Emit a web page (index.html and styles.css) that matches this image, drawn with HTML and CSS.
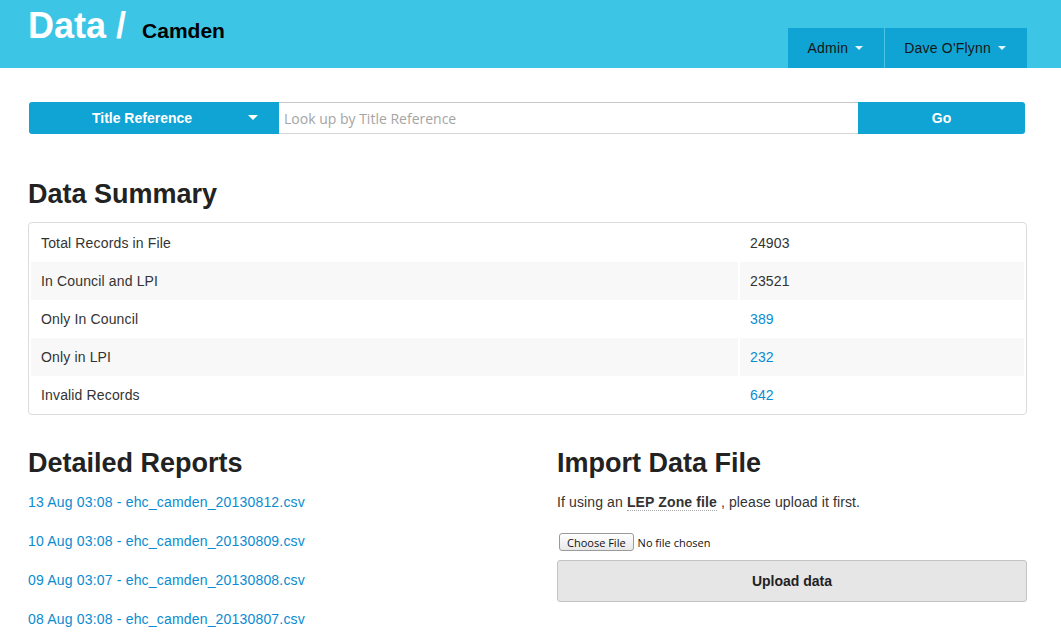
FILE: index.html
```html
<!DOCTYPE html>
<html>
<head>
<meta charset="utf-8">
<link rel="stylesheet" href="styles.css">
</head>
<body>
<header class="topbar">
  <h1 class="brand">Data / <span class="brand-sub">Camden</span></h1>
  <nav class="topnav">
    <a class="nav-btn nav-admin" href="#">Admin <span class="caret"></span></a>
    <a class="nav-btn nav-user" href="#">Dave O'Flynn <span class="caret"></span></a>
  </nav>
</header>

<main class="container">
  <form class="search">
    <button type="button" class="search-type"><span class="search-type-label">Title Reference</span><span class="caret caret-white"></span></button>
    <input class="search-input" type="text" placeholder="Look up by Title Reference">
    <button type="button" class="search-go">Go</button>
  </form>

  <h2 class="section-title summary-title">Data Summary</h2>
  <div class="summary-box">
    <table class="summary">
      <tr><td class="c1">Total Records in File</td><td>24903</td></tr>
      <tr class="odd"><td class="c1">In Council and LPI</td><td>23521</td></tr>
      <tr><td class="c1">Only In Council</td><td><a href="#">389</a></td></tr>
      <tr class="odd"><td class="c1">Only in LPI</td><td><a href="#">232</a></td></tr>
      <tr><td class="c1">Invalid Records</td><td><a href="#">642</a></td></tr>
    </table>
  </div>

  <div class="columns">
    <section class="col">
      <h2 class="section-title">Detailed Reports</h2>
      <ul class="reports">
        <li><a href="#">13 Aug 03:08 - ehc_camden_20130812.csv</a></li>
        <li><a href="#">10 Aug 03:08 - ehc_camden_20130809.csv</a></li>
        <li><a href="#">09 Aug 03:07 - ehc_camden_20130808.csv</a></li>
        <li><a href="#">08 Aug 03:08 - ehc_camden_20130807.csv</a></li>
      </ul>
    </section>
    <section class="col">
      <h2 class="section-title">Import Data File</h2>
      <p class="import-note">If using an <abbr class="lep" title="LEP Zone file">LEP Zone file</abbr> , please upload it first.</p>
      <div class="file-row"><input class="file-input" type="file"></div>
      <button type="button" class="upload-btn">Upload data</button>
    </section>
  </div>
</main>
</body>
</html>
```
FILE: styles.css
```css
html, body {
  margin: 0;
  padding: 0;
  background: #fff;
  font-family: "Liberation Sans", Arial, sans-serif;
  font-size: 14px;
  color: #333;
}

a {
  color: #0b8bd0;
  text-decoration: none;
}

.topbar {
  height: 68px;
  background: #3dc5e6;
  display: flex;
  justify-content: space-between;
  align-items: flex-end;
}

.brand {
  margin: 0 0 0 28px;
  align-self: flex-start;
  padding-top: 8px;
  font-size: 36px;
  line-height: 36px;
  font-weight: bold;
  color: #fff;
}

.brand-sub {
  font-size: 21px;
  color: #000;
  margin-left: 6px;
}

.topnav {
  display: flex;
  margin-right: 34px;
}

.nav-btn {
  display: flex;
  align-items: center;
  height: 40px;
  background: #10a4d5;
  color: #161616;
  font-size: 14px;
  letter-spacing: 0.2px;
}

.nav-admin {
  padding: 0 21px 0 20px;
  border-right: 1px solid #4ec3e6;
}

.nav-user {
  padding: 0 21px 0 19px;
}

.caret {
  display: inline-block;
  width: 0;
  height: 0;
  margin-left: 7px;
  border-left: 4px solid transparent;
  border-right: 4px solid transparent;
  border-top: 4px solid #e6f5fb;
}

.container {
  width: 999px;
  margin-left: 28px;
}

.search {
  display: flex;
  margin: 34px 2px 0 1px;
  height: 32px;
}

.search-type {
  position: relative;
  width: 250px;
  border: 0;
  background: #10a4d5;
  border-radius: 3px 0 0 3px;
  color: #fff;
  font-family: "Liberation Sans", Arial, sans-serif;
  font-weight: bold;
  font-size: 14px;
  padding: 0 24px 0 0;
  cursor: pointer;
}

.search-type .caret-white {
  position: absolute;
  right: 21px;
  top: 13px;
  margin: 0;
  border-left-width: 5px;
  border-right-width: 5px;
  border-top: 5px solid #fff;
}

.search-input {
  flex: 1;
  min-width: 0;
  box-sizing: border-box;
  height: 32px;
  border: 0;
  border-top: 1px solid #c8c8c8;
  border-bottom: 1px solid #d4d4d4;
  padding: 0 5px;
  font-family: "Open Sans", sans-serif;
  font-size: 14px;
  color: #333;
  outline: none;
}

.search-input::placeholder {
  color: #a5a5a5;
}

.search-go {
  width: 167px;
  border: 0;
  background: #10a4d5;
  border-radius: 0 3px 3px 0;
  color: #fff;
  font-family: "Liberation Sans", Arial, sans-serif;
  font-weight: bold;
  font-size: 14px;
}

.section-title {
  margin: 0;
  font-size: 27px;
  line-height: 32px;
  font-weight: bold;
  color: #222;
}

.summary-title {
  margin-top: 44px;
}

.summary-box {
  margin-top: 12px;
  border: 1px solid #dcdcdc;
  border-radius: 4px;
  padding-top: 1px;
}

.summary {
  width: 100%;
  border-spacing: 2px 0;
}

.summary td {
  height: 38px;
  padding: 0 9px 0 10px;
  vertical-align: middle;
  font-size: 14px;
  color: #333;
  letter-spacing: 0.15px;
}

.summary td.c1 {
  width: 688px;
}

.summary tr.odd td {
  background: #f8f8f8;
}

.columns {
  display: grid;
  grid-template-columns: 470px 470px;
  column-gap: 59px;
  margin-top: 32px;
}

.reports {
  list-style: none;
  margin: 13px 0 0;
  padding: 0;
}

.reports li {
  line-height: 20px;
  margin-bottom: 19px;
  letter-spacing: 0.18px;
}

.import-note {
  margin: 13px 0 0;
  line-height: 20px;
  letter-spacing: 0.12px;
}

.lep {
  font-weight: bold;
  text-decoration: none;
  border-bottom: 1px dotted #aaa;
}

.file-row {
  margin-top: 21px;
  height: 18px;
  padding-left: 2px;
}

.file-input {
  font-family: "Open Sans", sans-serif;
  font-size: 11px;
  color: #111;
}

.file-input::file-selector-button {
  font-family: "Open Sans", sans-serif;
  font-size: 11px;
  height: 18px;
  padding: 0 7px;
  margin-right: 4px;
  border: 1px solid #9a9a9a;
  border-radius: 3px;
  background: linear-gradient(#ffffff, #e8e8e8);
  color: #111;
}

.upload-btn {
  display: block;
  width: 100%;
  height: 42px;
  margin-top: 9px;
  background: #e6e6e6;
  border: 1px solid #c4c4c4;
  border-radius: 3px;
  font-family: "Liberation Sans", Arial, sans-serif;
  font-weight: bold;
  font-size: 14px;
  color: #222;
}
```
